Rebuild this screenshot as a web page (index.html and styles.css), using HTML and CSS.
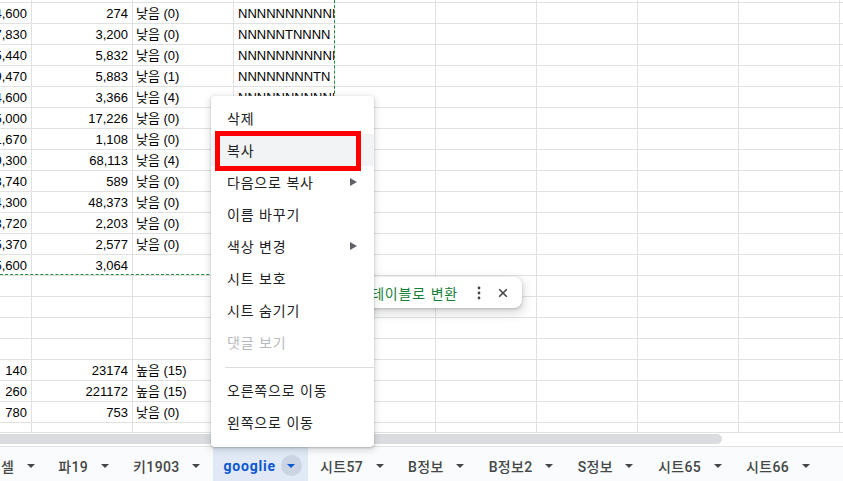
FILE: index.html
```html
<!DOCTYPE html>
<html lang="ko">
<head>
	<meta charset="UTF-8">
	<title>시트 메뉴</title>
	<link rel="stylesheet" href="styles.css">
</head>
<body>
	<div class="sheet">
		<div class="rows">
			<div class="row"><span class="c0">34,600</span><span class="c1">274</span><span class="c2">낮음 (0)</span><span class="c3">NNNNNNNNNNN</span></div>
			<div class="row"><span class="c0">27,830</span><span class="c1">3,200</span><span class="c2">낮음 (0)</span><span class="c3">NNNNNTNNNN</span></div>
			<div class="row"><span class="c0">15,440</span><span class="c1">5,832</span><span class="c2">낮음 (0)</span><span class="c3">NNNNNNNNNNN</span></div>
			<div class="row"><span class="c0">19,470</span><span class="c1">5,883</span><span class="c2">낮음 (1)</span><span class="c3">NNNNNNNNTN</span></div>
			<div class="row"><span class="c0">14,600</span><span class="c1">3,366</span><span class="c2">낮음 (4)</span><span class="c3">NNNNNNNNNNN</span></div>
			<div class="row"><span class="c0">25,000</span><span class="c1">17,226</span><span class="c2">낮음 (0)</span><span class="c3">NNNNNNNNNNN</span></div>
			<div class="row"><span class="c0">11,670</span><span class="c1">1,108</span><span class="c2">낮음 (0)</span><span class="c3"></span></div>
			<div class="row"><span class="c0">19,300</span><span class="c1">68,113</span><span class="c2">낮음 (4)</span><span class="c3"></span></div>
			<div class="row"><span class="c0">13,740</span><span class="c1">589</span><span class="c2">낮음 (0)</span><span class="c3"></span></div>
			<div class="row"><span class="c0">14,300</span><span class="c1">48,373</span><span class="c2">낮음 (0)</span><span class="c3"></span></div>
			<div class="row"><span class="c0">13,720</span><span class="c1">2,203</span><span class="c2">낮음 (0)</span><span class="c3"></span></div>
			<div class="row"><span class="c0">15,370</span><span class="c1">2,577</span><span class="c2">낮음 (0)</span><span class="c3"></span></div>
			<div class="row"><span class="c0">15,600</span><span class="c1">3,064</span><span class="c2"></span><span class="c3"></span></div>
			<div class="row"></div>
			<div class="row"></div>
			<div class="row"></div>
			<div class="row"></div>
			<div class="row"><span class="c0">140</span><span class="c1">23174</span><span class="c2">높음 (15)</span><span class="c3"></span></div>
			<div class="row"><span class="c0">260</span><span class="c1">221172</span><span class="c2">높음 (15)</span><span class="c3"></span></div>
			<div class="row"><span class="c0">780</span><span class="c1">753</span><span class="c2">낮음 (0)</span><span class="c3"></span></div>
		</div>
		<!-- 복사 영역 표시 -->
		<div class="copy-range"></div>
	</div>

	<div class="hscroll"><div class="thumb"></div></div>

	<div class="tabs">
		<div class="tab first">셀<i class="drop"></i></div>
		<div class="tab">파19<i class="drop"></i></div>
		<div class="tab">키1903<i class="drop"></i></div>
		<div class="tab on">googlie<i class="drop"></i></div>
		<div class="tab">시트57<i class="drop"></i></div>
		<div class="tab">B정보<i class="drop"></i></div>
		<div class="tab">B정보2<i class="drop"></i></div>
		<div class="tab">S정보<i class="drop"></i></div>
		<div class="tab">시트65<i class="drop"></i></div>
		<div class="tab">시트66<i class="drop"></i></div>
	</div>

	<div class="chip">
		<span class="chip-text">테이블로 변환</span>
		<span class="chip-btn">
			<svg width="24" height="24" viewBox="0 0 24 24"><circle cx="12" cy="7" r="1.4"/><circle cx="12" cy="12" r="1.4"/><circle cx="12" cy="17" r="1.4"/></svg>
		</span>
		<span class="chip-btn">
			<svg width="24" height="24" viewBox="0 0 24 24"><path d="M8.2 8.2l7.6 7.6M15.8 8.2l-7.6 7.6" fill="none" stroke="#444746" stroke-width="1.6"/></svg>
		</span>
	</div>

	<ul class="menu">
		<li class="item">삭제</li>
		<li class="item hover">복사<span class="mark"></span></li>
		<li class="item sub">다음으로 복사</li>
		<li class="item">이름 바꾸기</li>
		<li class="item sub">색상 변경</li>
		<li class="item">시트 보호</li>
		<li class="item">시트 숨기기</li>
		<li class="item off">댓글 보기</li>
		<li class="sep"></li>
		<li class="item">오른쪽으로 이동</li>
		<li class="item">왼쪽으로 이동</li>
	</ul>
</body>
</html>
```

FILE: styles.css
```css
*{margin: 0; padding: 0; box-sizing: border-box;}
ul, li{list-style: none;}
html, body{width: 843px; height: 481px; overflow: hidden;}
body{position: relative; background: #fff; color: #000; font-family: "Liberation Sans", Arial, "Noto Sans CJK KR", sans-serif;}

/* 셀 영역 */
.sheet{
	position: relative; height: 432px; overflow: hidden;
	background-image: linear-gradient(to left, #e1e1e1 1px, transparent 1px), linear-gradient(to top, #e1e1e1 1px, transparent 1px);
	background-size: 101px 100%, 100% 21px;
	background-position: -69px 0, 0 -18px;
}
.rows{padding-top: 3px; margin-left: -70px;}
.row{display: flex; height: 21px; padding-top: 1px; line-height: 20px; font-size: 13px; white-space: nowrap;}
.row span{flex: none; width: 101px; overflow: hidden;}
.c0, .c1{text-align: right; padding-right: 4px;}
.c2{padding-left: 4px;}
.c3{padding-left: 5px;}
.copy-range{position: absolute; left: -10px; top: -10px; width: 345px; height: 285px; border-right: 1px dashed #1e8e3e; border-bottom: 1px dashed #1e8e3e;}

/* 가로 스크롤 */
.hscroll{height: 14px; padding-top: 1px; border-top: 1px solid #e1e1e1;}
.hscroll .thumb{width: 722px; height: 10px; background: #dadce0; border-radius: 0 5px 5px 0;}

/* 시트 탭 */
.tabs{display: flex; height: 35px; border-top: 1px solid #e1e3e1; background: #f9fbfd; overflow: hidden;}
.tab{flex: none; display: flex; align-items: center; padding: 3px 6px 0 12px; font: 500 14px Roboto, "Noto Sans CJK KR", sans-serif; letter-spacing: .35px; color: #444746; white-space: nowrap;}
.tab.first{padding-left: 1px; padding-right: 5px;}
.tab .drop{display: flex; align-items: center; justify-content: center; width: 21px; height: 21px; margin-left: 6px; border-radius: 50%;}
.tab .drop:after{content: ""; border-left: 4px solid transparent; border-right: 4px solid transparent; border-top: 4px solid currentColor;}
.tab.on{padding-left: 11px; background: #e1e9f7; color: #0b57d0; font-weight: 700; letter-spacing: .8px;}
.tab.on .drop{margin-left: 5px; background: #cbd4e3;}

/* 테이블 변환 칩 */
.chip{position: absolute; left: 330px; top: 277px; width: 192px; height: 31px; display: flex; align-items: center; justify-content: flex-end; padding-right: 7px; background: #fff; border-radius: 8px; box-shadow: 0 1px 3px rgba(60,64,67,.3), 0 4px 8px 3px rgba(60,64,67,.15);}
.chip-text{margin-right: 9px; font: 14px "Noto Sans CJK KR", sans-serif; letter-spacing: .8px; color: #188038; white-space: nowrap;}
.chip-btn{display: flex; width: 24px; height: 24px; fill: #444746;}

/* 컨텍스트 메뉴 */
.menu{position: absolute; left: 211px; top: 96px; width: 163px; padding: 6px 0 9px; background: #fff; border-radius: 4px; box-shadow: 0 2px 6px 2px rgba(60,64,67,.15), 0 1px 2px rgba(60,64,67,.3); font: 14px "Noto Sans CJK KR", sans-serif; letter-spacing: .8px; color: #202124;}
.menu .item{position: relative; height: 32px; line-height: 32px; padding-left: 16px; white-space: nowrap;}
.menu .hover{background: #f1f3f4;}
.menu .off{color: #b8babd;}
.menu .sub:after{content: ""; position: absolute; right: 17px; top: 12px; border-top: 4px solid transparent; border-bottom: 4px solid transparent; border-left: 7px solid #5f6368;}
.menu .sep{height: 1px; margin: 9px 0 6px 14px; background: #dadce0;}
.menu .mark{position: absolute; left: 4px; top: -3px; width: 146px; height: 40px; border: 5px solid #f00;}
```
